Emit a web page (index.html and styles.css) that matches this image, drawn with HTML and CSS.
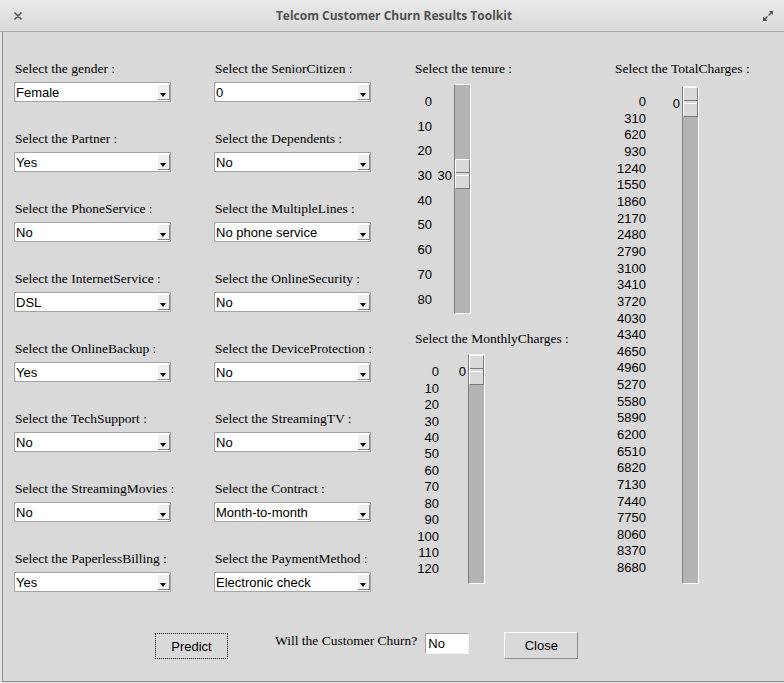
FILE: index.html
```html
<!DOCTYPE html>
<html>
<head>
<meta charset="utf-8">
<title>Telcom Customer Churn Results Toolkit</title>
<link rel="stylesheet" href="styles.css">
</head>
<body>
<div class="window">
  <header class="titlebar">
    <span class="tb-close"><svg width="8" height="8" viewBox="0 0 8 8"><path d="M1 1L7 7M7 1L1 7" stroke="#555" stroke-width="1.7" stroke-linecap="round"/></svg></span>
    <span class="title">Telcom Customer Churn Results Toolkit</span>
    <span class="tb-max"><svg width="12" height="12" viewBox="0 0 12 12"><path d="M6.5 5.5L10 2" stroke="#555" stroke-width="1.4"/><path d="M7 1H11V5Z" fill="#555"/><path d="M5.5 6.5L2 10" stroke="#555" stroke-width="1.4"/><path d="M1 6.5V11H5.5Z" fill="#555"/></svg></span>
  </header>
  <main class="client">
    <div class="grid">
      <div class="fields">
        <div class="field"><div class="label">Select the gender :</div><div class="combo"><span class="combo-text">Female</span><span class="combo-btn"></span></div></div>
        <div class="field"><div class="label">Select the Partner :</div><div class="combo"><span class="combo-text">Yes</span><span class="combo-btn"></span></div></div>
        <div class="field"><div class="label">Select the PhoneService :</div><div class="combo"><span class="combo-text">No</span><span class="combo-btn"></span></div></div>
        <div class="field"><div class="label">Select the InternetService :</div><div class="combo"><span class="combo-text">DSL</span><span class="combo-btn"></span></div></div>
        <div class="field"><div class="label">Select the OnlineBackup :</div><div class="combo"><span class="combo-text">Yes</span><span class="combo-btn"></span></div></div>
        <div class="field"><div class="label">Select the TechSupport :</div><div class="combo"><span class="combo-text">No</span><span class="combo-btn"></span></div></div>
        <div class="field"><div class="label">Select the StreamingMovies :</div><div class="combo"><span class="combo-text">No</span><span class="combo-btn"></span></div></div>
        <div class="field"><div class="label">Select the PaperlessBilling :</div><div class="combo"><span class="combo-text">Yes</span><span class="combo-btn"></span></div></div>
      </div>
      <div class="fields">
        <div class="field"><div class="label">Select the SeniorCitizen :</div><div class="combo"><span class="combo-text">0</span><span class="combo-btn"></span></div></div>
        <div class="field"><div class="label">Select the Dependents :</div><div class="combo"><span class="combo-text">No</span><span class="combo-btn"></span></div></div>
        <div class="field"><div class="label">Select the MultipleLines :</div><div class="combo"><span class="combo-text">No phone service</span><span class="combo-btn"></span></div></div>
        <div class="field"><div class="label">Select the OnlineSecurity :</div><div class="combo"><span class="combo-text">No</span><span class="combo-btn"></span></div></div>
        <div class="field"><div class="label">Select the DeviceProtection :</div><div class="combo"><span class="combo-text">No</span><span class="combo-btn"></span></div></div>
        <div class="field"><div class="label">Select the StreamingTV :</div><div class="combo"><span class="combo-text">No</span><span class="combo-btn"></span></div></div>
        <div class="field"><div class="label">Select the Contract :</div><div class="combo"><span class="combo-text">Month-to-month</span><span class="combo-btn"></span></div></div>
        <div class="field"><div class="label">Select the PaymentMethod :</div><div class="combo"><span class="combo-text">Electronic check</span><span class="combo-btn"></span></div></div>
      </div>
      <div class="sliders">
        <div class="label">Select the tenure :</div>
        <div class="scale scale-tenure">
          <div class="ticks"><span>0</span><span>10</span><span>20</span><span>30</span><span>40</span><span>50</span><span>60</span><span>70</span><span>80</span></div>
          <div class="trough"><div class="handle" style="top:74px"><span class="value">30</span></div></div>
        </div>
        <div class="label label-monthly">Select the MonthlyCharges :</div>
        <div class="scale scale-monthly">
          <div class="ticks"><span>0</span><span>10</span><span>20</span><span>30</span><span>40</span><span>50</span><span>60</span><span>70</span><span>80</span><span>90</span><span>100</span><span>110</span><span>120</span></div>
          <div class="trough"><div class="handle" style="top:0px"><span class="value">0</span></div></div>
        </div>
      </div>
      <div class="sliders">
        <div class="label">Select the TotalCharges :</div>
        <div class="scale scale-total">
          <div class="ticks"><span>0</span><span>310</span><span>620</span><span>930</span><span>1240</span><span>1550</span><span>1860</span><span>2170</span><span>2480</span><span>2790</span><span>3100</span><span>3410</span><span>3720</span><span>4030</span><span>4340</span><span>4650</span><span>4960</span><span>5270</span><span>5580</span><span>5890</span><span>6200</span><span>6510</span><span>6820</span><span>7130</span><span>7440</span><span>7750</span><span>8060</span><span>8370</span><span>8680</span></div>
          <div class="trough"><div class="handle" style="top:0px"><span class="value">0</span></div></div>
        </div>
      </div>
    </div>
    <div class="actions">
      <div class="btn btn-predict">Predict</div>
      <div class="label result-label">Will the Customer Churn?</div>
      <div class="entry">No</div>
      <div class="btn btn-close">Close</div>
    </div>
  </main>
</div>
</body>
</html>
```

FILE: styles.css
```css
* { box-sizing: border-box; margin: 0; padding: 0; }
html, body { width: 784px; height: 683px; overflow: hidden; }
body {
  background: #e4e4e4;
  font-family: "Liberation Sans", Arial, sans-serif;
  font-size: 13px;
  color: #000;
}
.window { display: flex; flex-direction: column; height: 683px; }

.titlebar {
  flex: none;
  height: 32px;
  display: grid;
  grid-template-columns: 1fr auto 1fr;
  align-items: center;
  padding: 0 10px 0 14px;
  background: linear-gradient(#e9e9e9, #dadada);
  border-bottom: 1px solid #a6a6a6;
  color: #555;
}
.tb-close { display: flex; }
.tb-max { justify-self: end; display: flex; }
.title {
  font-family: "Open Sans", "Noto Sans", sans-serif;
  font-weight: 700;
  font-size: 12px;
  color: #505050;
}

.client {
  flex: none;
  height: 650px;
  margin-left: 2px;
  border-left: 1px solid #8a8a8a;
  border-bottom: 1px solid #8a8a8a;
  background: #d9d9d9;
  padding-top: 29px;
}
.grid {
  display: grid;
  grid-template-columns: 200px 200px 200px 170px;
  padding-left: 11px;
}
.fields { display: flex; flex-direction: column; gap: 29px; }

.label {
  font-family: "Liberation Serif", "Times New Roman", serif;
  font-size: 13.5px;
  line-height: 16px;
  padding-left: 1px;
  white-space: nowrap;
}

.combo {
  margin-top: 5px;
  width: 157px;
  height: 20px;
  display: flex;
  align-items: center;
  padding: 1px 0 1px 1px;
  background: #fff;
  border: 1px solid #a4a4a4;
}
.combo-text { flex: 1; padding-top: 2px; line-height: 16px; white-space: nowrap; }
.combo-btn {
  position: relative;
  width: 13px;
  height: 16px;
  background: #f0f0f0;
  border: 1px solid;
  border-color: #fff #8c8c8c #8c8c8c #fff;
}
.combo-btn::after {
  content: "";
  position: absolute;
  left: 2px;
  top: 8px;
  border-left: 3.5px solid transparent;
  border-right: 3.5px solid transparent;
  border-top: 4px solid #000;
}

.sliders { display: flex; flex-direction: column; }
.scale { display: flex; align-items: flex-start; }
.ticks {
  display: flex;
  flex-direction: column;
  justify-content: space-between;
  text-align: right;
  line-height: 16px;
}
.trough {
  position: relative;
  width: 17px;
  height: 100%;
  background: #b3b3b3;
  border-left: 1px solid #7e7e7e;
  border-top: 1px solid #f4f4f4;
  border-right: 1px solid #fff;
  border-bottom: 1px solid #fff;
}
.handle {
  position: absolute;
  left: 0;
  width: 15px;
  height: 30px;
  background: #d9d9d9;
  border: 1px solid;
  border-color: #fff #7a7a7a #7a7a7a #fff;
}
.handle::after {
  content: "";
  position: absolute;
  left: 0;
  right: 0;
  top: 12px;
  height: 2px;
  border-top: 1px solid #7a7a7a;
  border-bottom: 1px solid #fff;
}
.value {
  position: absolute;
  right: calc(100% + 4px);
  top: 8px;
  line-height: 16px;
}

.scale-tenure { margin-top: 7px; height: 230px; }
.scale-tenure .ticks { width: 18px; margin-top: 10px; height: 213.5px; margin-right: 22px; }
.label-monthly { margin-top: 17px; }
.scale-monthly { margin-top: 7px; height: 230px; }
.scale-monthly .ticks { width: 25px; margin-top: 10.2px; height: 213.3px; margin-right: 29px; }
.scale-total { margin-top: 9px; height: 498px; }
.scale-total .ticks { width: 32px; margin-top: 8.2px; height: 482.3px; margin-right: 36px; }

.actions {
  display: flex;
  align-items: flex-start;
  margin-top: 40px;
  padding-left: 152px;
}
.btn {
  display: flex;
  align-items: center;
  justify-content: center;
  background: #d9d9d9;
  font-size: 13px;
}
.btn-predict {
  margin-top: 1px;
  width: 73px;
  height: 26px;
  border: 1px dotted #000;
}
.result-label { margin-left: 47px; margin-top: 1px; padding-left: 0; }
.entry {
  margin-left: 8px;
  margin-top: 1px;
  width: 44px;
  height: 21px;
  padding-left: 2px;
  line-height: 19px;
  background: #fff;
  border: 1px solid;
  border-color: #a0a0a0 #f4f4f4 #f4f4f4 #a0a0a0;
}
.btn-close {
  margin-left: 35px;
  width: 74px;
  height: 27px;
  border: 1px solid;
  border-color: #fff #8c8c8c #8c8c8c #fff;
}
```
